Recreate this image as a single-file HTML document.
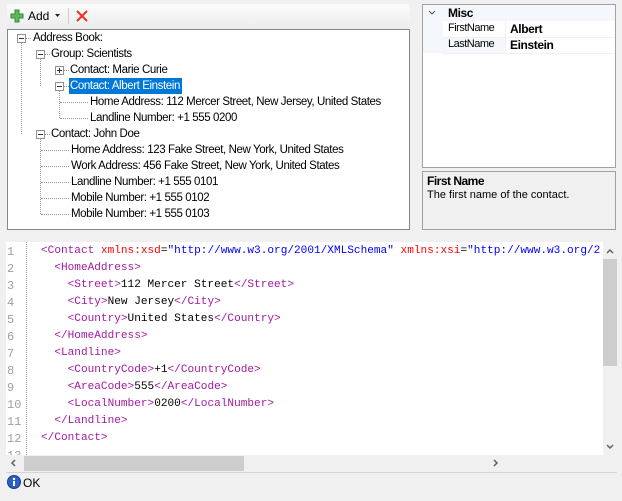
<!DOCTYPE html>
<html><head><style>
body{margin:0;width:622px;height:501px;background:#f0f0f0;position:relative;overflow:hidden;font-family:"Liberation Sans",sans-serif;font-size:12px;color:#000}
.a{position:absolute;white-space:nowrap}
.tb{left:7px;top:4px;width:403px;height:25px;background:linear-gradient(#fbfbfb,#ececec);border-radius:3px 3px 0 0}
.tree{left:7px;top:29px;width:401px;height:199px;background:#fff;border:1px solid #828790}
.t{position:absolute;height:16px;line-height:16px;font-size:11.5px;letter-spacing:-0.4px;white-space:nowrap}
.box{position:absolute;width:7px;height:7px;border:1px solid #919191;background:#fff}
.box:before{content:"";position:absolute;left:1px;top:3px;width:5px;height:1px;background:#333}
.box.p:after{content:"";position:absolute;left:3px;top:1px;width:1px;height:5px;background:#333}
.dv{position:absolute;border-left:1px dotted #999;width:0}
.dh{position:absolute;border-top:1px dotted #999;height:0}
.code{font-family:"Liberation Mono",monospace;font-size:11.1px;line-height:17px;white-space:pre}
.tg{color:#a31aa3}.at{color:#f00}.v{color:#00f}
.ln{color:#a0a0a0;font-family:"Liberation Mono",monospace;font-size:12px;line-height:17px;white-space:pre}
</style></head><body>
<div class="a tb"></div>
<svg class="a" style="left:10px;top:9px" width="14" height="14"><path d="M5 1h4v4h4v4h-4v4h-4v-4h-4v-4h4z" fill="#5cb85c" stroke="#3a8a3a"/></svg>
<div class="a" style="left:28px;top:9px;font-size:12px">Add</div>
<svg class="a" style="left:55px;top:14px" width="6" height="4"><path d="M0 0h5l-2.5 3z" fill="#222"/></svg>
<div class="a" style="left:68px;top:8px;width:1px;height:16px;background:#ccc"></div>
<svg class="a" style="left:75px;top:9px" width="14" height="14"><path d="M2 2L12 12M12 2L2 12" stroke="#e8312a" stroke-width="2"/></svg>
<div class="a tree"></div>
<div class="dv" style="left:21px;top:42px;height:92px"></div>
<div class="dv" style="left:40px;top:58px;height:28px"></div>
<div class="dv" style="left:59px;top:90px;height:28px"></div>
<div class="dv" style="left:40px;top:138px;height:76px"></div>
<div class="dh" style="left:25px;top:38px;width:6px"></div>
<div class="dh" style="left:44px;top:54px;width:6px"></div>
<div class="dh" style="left:63px;top:70px;width:6px"></div>
<div class="dh" style="left:63px;top:86px;width:6px"></div>
<div class="dh" style="left:60px;top:102px;width:28px"></div>
<div class="dh" style="left:60px;top:118px;width:28px"></div>
<div class="dh" style="left:44px;top:134px;width:6px"></div>
<div class="dh" style="left:41px;top:150px;width:28px"></div>
<div class="dh" style="left:41px;top:166px;width:28px"></div>
<div class="dh" style="left:41px;top:182px;width:28px"></div>
<div class="dh" style="left:41px;top:198px;width:28px"></div>
<div class="dh" style="left:41px;top:214px;width:28px"></div>
<div class="box" style="left:17px;top:34px"></div>
<div class="box" style="left:36px;top:50px"></div>
<div class="box p" style="left:55px;top:66px"></div>
<div class="box" style="left:55px;top:82px"></div>
<div class="box" style="left:36px;top:130px"></div>
<div class="t" style="left:33px;top:30px">Address Book:</div>
<div class="t" style="left:51px;top:46px">Group: Scientists</div>
<div class="t" style="left:70px;top:62px">Contact: Marie Curie</div>
<div class="t" style="left:69px;top:78px;background:#0078d7;color:#fff;padding:0 2px 0 1px">Contact: Albert Einstein</div>
<div class="t" style="left:90px;top:94px">Home Address: 112 Mercer Street, New Jersey, United States</div>
<div class="t" style="left:90px;top:110px">Landline Number: +1 555 0200</div>
<div class="t" style="left:51px;top:126px">Contact: John Doe</div>
<div class="t" style="left:71px;top:142px">Home Address: 123 Fake Street, New York, United States</div>
<div class="t" style="left:71px;top:158px">Work Address: 456 Fake Street, New York, United States</div>
<div class="t" style="left:71px;top:174px">Landline Number: +1 555 0101</div>
<div class="t" style="left:71px;top:190px">Mobile Number: +1 555 0102</div>
<div class="t" style="left:71px;top:206px">Mobile Number: +1 555 0103</div>
<div class="a" style="left:422px;top:4px;width:192px;height:162px;background:#fff;border:1px solid #a0a0a0"></div>
<div class="a" style="left:423px;top:5px;width:192px;height:16px;background:#f4f7fc"></div>
<div class="a" style="left:423px;top:21px;width:20px;height:32px;background:#f4f7fc"></div>
<div class="a" style="left:443px;top:37px;width:62px;height:16px;background:#f4f7fc"></div>
<div class="a" style="left:443px;top:37px;width:172px;height:1px;background:#f0f0f0"></div>
<div class="a" style="left:443px;top:53px;width:172px;height:1px;background:#f0f0f0"></div>
<div class="a" style="left:505px;top:21px;width:1px;height:32px;background:#f0f0f0"></div>
<svg class="a" style="left:428px;top:10px" width="8" height="6"><path d="M1 1l3 3 3-3" stroke="#555" fill="none"/></svg>
<div class="a" style="left:448px;top:6px;font-weight:bold;letter-spacing:-0.4px">Misc</div>
<div class="a" style="left:448px;top:22px;font-size:11px;letter-spacing:-0.5px">FirstName</div>
<div class="a" style="left:510px;top:22px;font-weight:bold;letter-spacing:-0.4px">Albert</div>
<div class="a" style="left:448px;top:38px;font-size:11px;letter-spacing:-0.5px">LastName</div>
<div class="a" style="left:510px;top:38px;font-weight:bold;letter-spacing:-0.4px">Einstein</div>
<div class="a" style="left:422px;top:171px;width:192px;height:57px;border:1px solid #a0a0a0"></div>
<div class="a" style="left:427px;top:174px;font-weight:bold;letter-spacing:-0.5px">First Name</div>
<div class="a" style="left:427px;top:189px;font-size:11px">The first name of the contact.</div>
<div class="a" style="left:6px;top:242px;width:597px;height:213px;background:#fff;overflow:hidden">
<div class="dv" style="left:20px;top:0;height:213px"></div>
<div class="a ln" style="left:1px;top:2px">1
2
3
4
5
6
7
8
9
10
11
12
13</div>
<div class="a code" style="left:35px;top:1px;width:560px;height:213px;overflow:hidden"><span class="tg">&lt;Contact </span><span class="at">xmlns:xsd</span>=<span class="v">"http://www.w3.org/2001/XMLSchema"</span> <span class="at">xmlns:xsi</span>=<span class="v">"http://www.w3.org/2001/XMLSchema-instance"</span>
<span class="tg">  &lt;HomeAddress&gt;</span>
<span class="tg">    &lt;Street&gt;</span>112 Mercer Street<span class="tg">&lt;/Street&gt;</span>
<span class="tg">    &lt;City&gt;</span>New Jersey<span class="tg">&lt;/City&gt;</span>
<span class="tg">    &lt;Country&gt;</span>United States<span class="tg">&lt;/Country&gt;</span>
<span class="tg">  &lt;/HomeAddress&gt;</span>
<span class="tg">  &lt;Landline&gt;</span>
<span class="tg">    &lt;CountryCode&gt;</span>+1<span class="tg">&lt;/CountryCode&gt;</span>
<span class="tg">    &lt;AreaCode&gt;</span>555<span class="tg">&lt;/AreaCode&gt;</span>
<span class="tg">    &lt;LocalNumber&gt;</span>0200<span class="tg">&lt;/LocalNumber&gt;</span>
<span class="tg">  &lt;/Landline&gt;</span>
<span class="tg">&lt;/Contact&gt;</span></div>
</div>
<div class="a" style="left:603px;top:242px;width:14px;height:213px;background:#f0f0f0"></div>
<div class="a" style="left:603px;top:259px;width:14px;height:107px;background:#cdcdcd"></div>
<svg class="a" style="left:606px;top:248px" width="8" height="6"><path d="M1 5l3-3 3 3" stroke="#606060" stroke-width="1.5" fill="none"/></svg>
<svg class="a" style="left:606px;top:444px" width="8" height="6"><path d="M1 1l3 3 3-3" stroke="#606060" stroke-width="1.5" fill="none"/></svg>
<div class="a" style="left:24px;top:456px;width:220px;height:15px;background:#cdcdcd"></div>
<svg class="a" style="left:10px;top:459px" width="6" height="8"><path d="M5 1l-3 3 3 3" stroke="#606060" stroke-width="1.5" fill="none"/></svg>
<svg class="a" style="left:493px;top:459px" width="6" height="8"><path d="M1 1l3 3-3 3" stroke="#606060" stroke-width="1.5" fill="none"/></svg>
<div class="a" style="left:6px;top:472px;width:611px;height:1px;background:#d5d5d5"></div>
<svg class="a" style="left:7px;top:475px" width="14" height="14"><circle cx="7" cy="7" r="6.5" fill="#2a5fc8" stroke="#1a3a8a"/><rect x="6" y="6" width="2" height="5" fill="#fff"/><circle cx="7" cy="4" r="1.2" fill="#fff"/></svg>
<div class="a" style="left:23px;top:476px">OK</div>
</body></html>
